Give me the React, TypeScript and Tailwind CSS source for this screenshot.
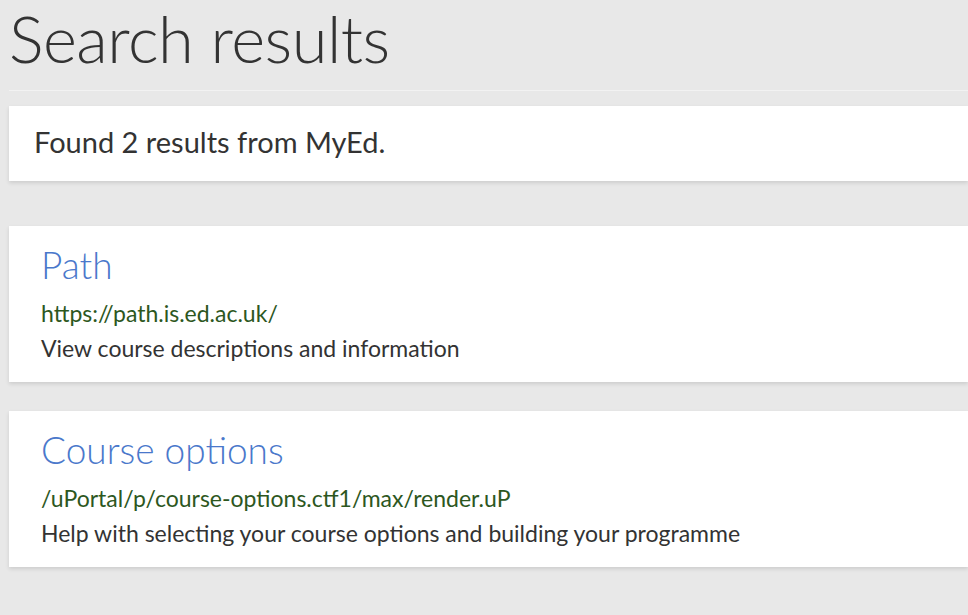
const results = [
  {
    title: "Path",
    url: "https://path.is.ed.ac.uk/",
    description: "View course descriptions and information",
  },
  {
    title: "Course options",
    url: "/uPortal/p/course-options.ctf1/max/render.uP",
    description: "Help with selecting your course options and building your programme",
  },
];

export default function App() {
  return (
    <div
      className="min-h-screen overflow-hidden bg-[#e8e8e8] pl-[9px] text-[#333333]"
      style={{ fontFamily: "Lato, 'Noto Sans', sans-serif" }}
    >
      <h1 className="pt-[2px] text-[65px] leading-[72px] font-light tracking-[-0.5px]">
        Search results
      </h1>
      <hr className="mt-[16px] border-t border-[#f2f2f2]" />

      <div className="mt-[15px] flex h-[75px] items-center bg-white pl-[25px] shadow-[0_2px_4px_rgba(0,0,0,0.12)]">
        <p className="-mt-[3px] text-[29px]">Found 2 results from MyEd.</p>
      </div>

      <ul className="mt-[45px] flex flex-col gap-[29px]">
        {results.map((result) => (
          <li
            key={result.title}
            className="bg-white pl-[32px] pt-[13px] pb-[16px] shadow-[0_2px_4px_rgba(0,0,0,0.12)]"
          >
            <a className="block text-[37px] leading-[52px] font-light text-[#4a78cb]" href="#">
              {result.title}
            </a>
            <p className="mt-[5px] text-[23px] leading-[35px] text-[#2d571e]">{result.url}</p>
            <p className="text-[23px] leading-[35px] text-[#333333]">{result.description}</p>
          </li>
        ))}
      </ul>
    </div>
  );
}
